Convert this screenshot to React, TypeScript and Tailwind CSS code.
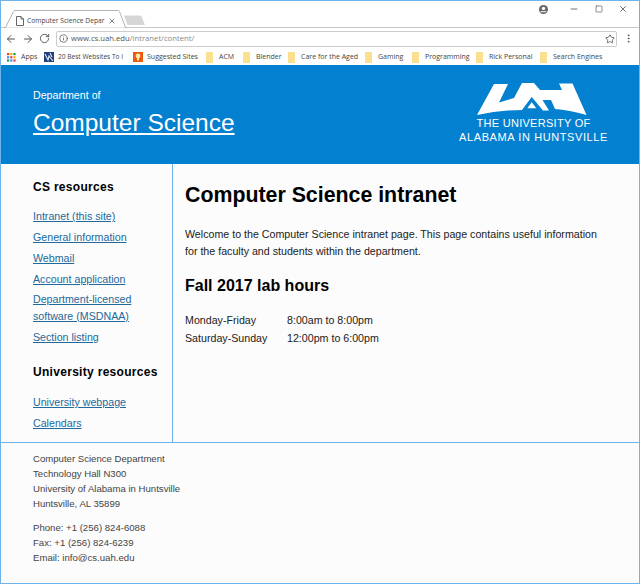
import { ArrowLeft, ArrowRight, RotateCw, Info, Star, Minus, Square, X, MoreVertical } from 'lucide-react';

const bookmarks = [
  { label: 'ACM', width: 'w-[37px]' },
  { label: 'Blender', width: 'w-[45px]' },
  { label: 'Care for the Aged', width: 'w-[77px]' },
  { label: 'Gaming', width: 'w-[47px]' },
  { label: 'Programming', width: 'w-[64px]' },
  { label: 'Rick Personal', width: 'w-[64px]' },
  { label: 'Search Engines', width: 'w-[70px]' },
];

const csLinks = ['Intranet (this site)', 'General information', 'Webmail'];

function AppsIcon() {
  const colors = ['#e34234', '#f4b400', '#0f9d58', '#4285f4', '#e34234', '#f4b400', '#0f9d58', '#4285f4', '#e34234'];
  return (
    <svg width="9" height="9" viewBox="0 0 9 9" className="shrink-0">
      {colors.map((c, i) => (
        <rect key={i} x={(i % 3) * 3.2} y={Math.floor(i / 3) * 3.2} width="2.2" height="2.2" fill={c} />
      ))}
    </svg>
  );
}

function TabShapes() {
  return (
    <svg width="150" height="18" viewBox="0 10 150 18" className="absolute left-[-1px] top-[9px]">
      <path d="M124 15.5H140Q141 15.5 141.5 16.5L145 25H127.5Z" fill="#d6d6d6" />
      <path d="M4 27.5H5.5L13.5 11.5Q14 10.5 15 10.5H118Q119 10.5 119.5 11.5L125.5 27.5H127" fill="#fff" stroke="#b4b4b4" />
    </svg>
  );
}

function PageIcon() {
  return (
    <svg width="8" height="10" viewBox="0 0 8 10" fill="none" stroke="#666" className="shrink-0">
      <path d="M.5.5H5L7.5 3V9.5H.5Z" />
      <path d="M5 .5V3H7.5" />
    </svg>
  );
}

function FrontierIcon() {
  return (
    <svg width="10" height="10" viewBox="0 0 10 10" className="shrink-0">
      <rect width="10" height="10" fill="#23407e" />
      <path d="M1 2L4 8L5 4L9 9M6 1L8 5" stroke="#dfe6f2" strokeWidth="1.1" fill="none" />
    </svg>
  );
}

function SuggestedIcon() {
  return (
    <svg width="10" height="10" viewBox="0 0 10 10" className="shrink-0">
      <rect width="10" height="10" fill="#ea5a0c" />
      <circle cx="5" cy="4" r="2.4" fill="#fde7b0" />
      <rect x="4" y="6" width="2" height="2.5" fill="#fde7b0" />
    </svg>
  );
}

function AccountIcon() {
  return (
    <svg width="9" height="9" viewBox="0 0 9 9">
      <circle cx="4.5" cy="4.5" r="4.5" fill="#666" />
      <circle cx="4.5" cy="3.4" r="1.7" fill="#fff" />
      <path d="M1.6 6.2H7.4V7.2H1.6Z" fill="#fff" />
    </svg>
  );
}

function UahLogo() {
  return (
    <svg width="111" height="33" viewBox="477 83 111 33" className="mr-[4px]">
      <path
        fill="#fff"
        d="M478 115L495 84H509L500 102.5L515 98L523 83H535L541 90H563L560 83.5H573.5L587.5 115Q570 110 556 109L552 100H543.5L550 110.5H544L532.7 97L523 110Q500 110 478 115Z"
      />
      <path fill="#fff" d="M532.7 102.3L537.3 108.3H528.3Z" />
    </svg>
  );
}

function Chrome() {
  return (
    <div className="h-[64px] shrink-0 bg-white font-['Open_Sans',sans-serif] text-[7px] text-[#444]">
      <div className="relative flex h-[27px] border-b border-[#c8c8c8] bg-white">
        <TabShapes />
        <div className="relative ml-[15px] mt-[14px] flex h-[12px] w-[101px] items-center whitespace-nowrap">
          <PageIcon />
          <span className="ml-[3px] text-[6.7px]">Computer Science Depar</span>
          <X size={8} strokeWidth={2} className="absolute left-[92px] top-[2px]" />
        </div>
        <div className="ml-auto mt-[3px] flex h-[10px] items-center text-[#555]">
          <AccountIcon />
          <Minus size={10} className="ml-[21px]" />
          <Square size={8} className="ml-[16px]" />
          <X size={10} className="ml-[15px] mr-[11px]" />
        </div>
      </div>
      <div className="flex h-[21px] items-center pl-[4px] pr-[5px] text-[#555]">
        <ArrowLeft size={12} className="shrink-0" />
        <ArrowRight size={12} className="ml-[5px] shrink-0" />
        <RotateCw size={11} className="ml-[5px] shrink-0" />
        <div className="ml-[6px] flex h-[16px] min-w-0 flex-1 items-center rounded-[2px] border border-[#ccc] pl-[2px] pr-[1px]">
          <Info size={9} className="shrink-0" />
          <span className="ml-[3px] text-[7.7px]">
            www.cs.uah.edu<span className="text-[#888]">/intranet/content/</span>
          </span>
          <Star size={10} className="ml-auto shrink-0" />
        </div>
        <MoreVertical size={11} className="ml-[6px] shrink-0" />
      </div>
      <div className="flex h-[16px] items-center whitespace-nowrap pl-[6px]">
        <AppsIcon />
        <span className="ml-[5px] w-[23px]">Apps</span>
        <FrontierIcon />
        <span className="ml-[4px] w-[67px] text-[6.6px]">20 Best Websites To I</span>
        <span className="ml-[8px] shrink-0">
          <SuggestedIcon />
        </span>
        <span className="ml-[4px] w-[59px]">Suggested Sites</span>
        {bookmarks.map((b) => (
          <div key={b.label} className={`flex shrink-0 items-center ${b.width}`}>
            <span className="mr-[6px] h-[11px] w-[7px] shrink-0 bg-[#fbe08f]" />
            <span>{b.label}</span>
          </div>
        ))}
      </div>
    </div>
  );
}

export default function App() {
  return (
    <div className="flex h-[584px] w-[640px] flex-col overflow-hidden border border-[#6db3e8] font-['Liberation_Sans',Arial,sans-serif]">
      <Chrome />
      <header className="flex h-[99px] shrink-0 items-start justify-between bg-[#0480d0] pl-[32px] pr-[31px] text-white">
        <div className="pt-[23px]">
          <p className="text-[10.67px] leading-[14px]">Department of</p>
          <a className="mt-[6px] block text-[24.5px] leading-[30px] underline">Computer Science</a>
        </div>
        <div className="flex flex-col items-center pt-[18px]">
          <UahLogo />
          <p className="mt-[1px] whitespace-nowrap text-center text-[11px] leading-[13.5px]">
            <span className="tracking-[0.28px]">THE UNIVERSITY OF</span>
            <br />
            <span className="tracking-[0.6px]">ALABAMA IN HUNTSVILLE</span>
          </p>
        </div>
      </header>
      <div className="flex h-[279px] shrink-0 border-b border-[#6db3e8] bg-[#fcfcfc]">
        <aside className="w-[172px] shrink-0 border-r border-[#6db3e8] pl-[32px] pt-[16px]">
          <h3 className="text-[12px] font-bold leading-[15px] tracking-[0.3px] text-black">CS resources</h3>
          <ul className="mt-[13px] text-[10.67px] leading-[17px] text-[#23699b]">
            {csLinks.map((l) => (
              <li key={l} className="mb-[4px]">
                <a className="underline">{l}</a>
              </li>
            ))}
            <li className="mb-[3px]">
              <a className="underline">Account application</a>
            </li>
            <li className="mb-[4px]">
              <a className="underline">
                Department-licensed
                <br />
                software (MSDNAA)
              </a>
            </li>
            <li>
              <a className="underline">Section listing</a>
            </li>
          </ul>
          <h3 className="mt-[19px] text-[12px] font-bold leading-[15px] tracking-[0.3px] text-black">University resources</h3>
          <ul className="mt-[14px] text-[10.67px] leading-[17px] text-[#23699b]">
            <li className="mb-[4px]">
              <a className="underline">University webpage</a>
            </li>
            <li>
              <a className="underline">Calendars</a>
            </li>
          </ul>
        </aside>
        <main className="flex-1 pl-[12px] pr-[30px] pt-[18px] text-[#222]">
          <h1 className="text-[21.33px] font-bold leading-[26px] text-black">Computer Science intranet</h1>
          <p className="mt-[18px] whitespace-nowrap text-[10.67px] leading-[17px]">
            Welcome to the Computer Science intranet page. This page contains useful information
            <br />
            for the faculty and students within the department.
          </p>
          <h2 className="mt-[16px] text-[16px] font-bold leading-[20px] text-black">Fall 2017 lab hours</h2>
          <div className="mt-[15px] grid grid-cols-[102px_1fr] text-[10.67px] leading-[18px]">
            <span>Monday-Friday</span>
            <span>8:00am to 8:00pm</span>
            <span>Saturday-Sunday</span>
            <span>12:00pm to 6:00pm</span>
          </div>
        </main>
      </div>
      <footer className="flex-1 bg-[#fcfcfc] pl-[32px] pt-[8px] text-[9.6px] leading-[15px] text-[#444]">
        <p>Computer Science Department</p>
        <p>Technology Hall N300</p>
        <p>University of Alabama in Huntsville</p>
        <p>Huntsville, AL 35899</p>
        <p className="mt-[9px]">Phone: +1 (256) 824-6088</p>
        <p>Fax: +1 (256) 824-6239</p>
        <p>Email: info@cs.uah.edu</p>
      </footer>
    </div>
  );
}
